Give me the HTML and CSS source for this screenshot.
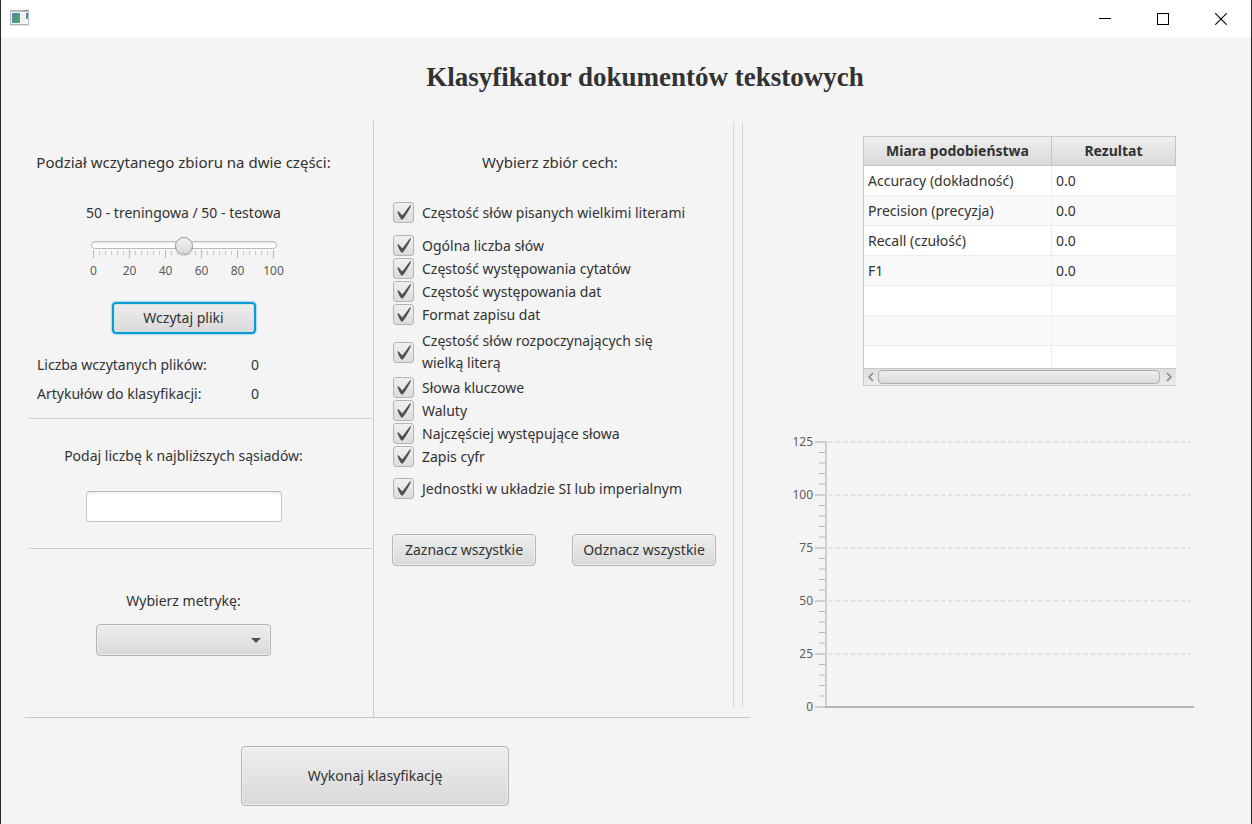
FILE: index.html
```html
<!DOCTYPE html>
<html lang="pl">
<head>
<meta charset="utf-8">
<meta name="viewport" content="width=device-width, initial-scale=1">
<title>Klasyfikator dokumentów tekstowych</title>
<link rel="stylesheet" href="styles.css">
</head>
<body>
<div class="window">
  <header class="titlebar">
    <svg class="app-icon" width="20" height="17" viewBox="0 0 20 17" aria-hidden="true">
      <defs><linearGradient id="pane" x1="0" y1="0" x2="1" y2="1"><stop offset="0" stop-color="#4a7fa5"/><stop offset="1" stop-color="#52b06c"/></linearGradient></defs>
      <rect x="0" y="15" width="19" height="1" fill="#e2e2e4"/>
      <rect x="0.5" y="0.5" width="18" height="14" fill="#fbfbfb" stroke="#b4b4bc"/>
      <rect x="1" y="0" width="17" height="2" fill="#b9bcc2"/>
      <rect x="13" y="0" width="5" height="1" fill="#85898f"/>
      <rect x="2" y="3" width="8" height="10" fill="url(#pane)"/>
      <rect x="11" y="3" width="4" height="10" fill="#efeff1"/>
      <rect x="16" y="3" width="2" height="6" fill="url(#pane)"/>
    </svg>
    <div class="window-buttons">
      <button type="button" aria-label="Minimalizuj"><svg width="12" height="12" viewBox="0 0 12 12"><path d="M0 5.500H12" stroke="#000"/></svg></button>
      <button type="button" aria-label="Maksymalizuj"><svg width="12" height="12" viewBox="0 0 12 12"><rect x=".5" y=".5" width="11" height="11" fill="none" stroke="#000"/></svg></button>
      <button type="button" aria-label="Zamknij"><svg width="12" height="12" viewBox="0 0 12 12"><path d="M.3.3 11.700 11.700M11.700.3.3 11.700" stroke="#000" stroke-width="1.100"/></svg></button>
    </div>
  </header>

  <main class="content">
    <h1 class="title">Klasyfikator dokumentów tekstowych</h1>
    <div class="workspace">
      <div class="controls">
        <div class="panels">
          <div class="settings">
            <section class="section split">
              <h2 class="heading">Podział wczytanego zbioru na dwie części:</h2>
              <label class="split-label" for="split">50 - treningowa / 50 - testowa</label>
              <input class="slider" id="split" type="range" min="0" max="100" value="50">
              <svg class="ticks" width="181" height="8" viewBox="0 0 181 8" aria-hidden="true">
                <path d="M0 3H181" stroke="#c6c6c6" stroke-width="4" stroke-dasharray="1 5"/>
                <path d="M0 4H181" stroke="#b8b8b8" stroke-width="8" stroke-dasharray="1 35"/>
              </svg>
              <div class="scale"><span>0</span><span>20</span><span>40</span><span>60</span><span>80</span><span>100</span></div>
              <button class="button load" type="button">Wczytaj pliki</button>
              <dl class="counts">
                <dt>Liczba wczytanych plików:</dt><dd>0</dd>
                <dt>Artykułów do klasyfikacji:</dt><dd>0</dd>
              </dl>
            </section>
            <section class="section neighbours">
              <label for="k">Podaj liczbę k najbliższych sąsiadów:</label>
              <input class="field" id="k" type="text">
            </section>
            <section class="section metric">
              <label for="metric">Wybierz metrykę:</label>
              <select class="combo" id="metric"><option></option></select>
            </section>
          </div>

          <section class="features">
            <h2 class="heading">Wybierz zbiór cech:</h2>
            <div class="checks">
              <label class="check first"><input type="checkbox" checked><span>Częstość słów pisanych wielkimi literami</span></label>
              <label class="check"><input type="checkbox" checked><span>Ogólna liczba słów</span></label>
              <label class="check"><input type="checkbox" checked><span>Częstość występowania cytatów</span></label>
              <label class="check"><input type="checkbox" checked><span>Częstość występowania dat</span></label>
              <label class="check"><input type="checkbox" checked><span>Format zapisu dat</span></label>
              <label class="check tall"><input type="checkbox" checked><span>Częstość słów rozpoczynających się wielką literą</span></label>
              <label class="check"><input type="checkbox" checked><span>Słowa kluczowe</span></label>
              <label class="check"><input type="checkbox" checked><span>Waluty</span></label>
              <label class="check"><input type="checkbox" checked><span>Najczęściej występujące słowa</span></label>
              <label class="check"><input type="checkbox" checked><span>Zapis cyfr</span></label>
              <label class="check last"><input type="checkbox" checked><span>Jednostki w układzie SI lub imperialnym</span></label>
            </div>
            <div class="select-buttons">
              <button class="button" type="button">Zaznacz wszystkie</button>
              <button class="button" type="button">Odznacz wszystkie</button>
            </div>
          </section>
          <div class="divider"></div>
        </div>
        <div class="run-bar">
          <button class="button run" type="button">Wykonaj klasyfikację</button>
        </div>
      </div>

      <div class="results">
        <div class="table-view">
          <div class="table-clip">
            <table class="table">
              <thead><tr><th scope="col">Miara podobieństwa</th><th scope="col">Rezultat</th></tr></thead>
              <tbody>
                <tr><td>Accuracy (dokładność)</td><td>0.0</td></tr>
                <tr><td>Precision (precyzja)</td><td>0.0</td></tr>
                <tr><td>Recall (czułość)</td><td>0.0</td></tr>
                <tr><td>F1</td><td>0.0</td></tr>
                <tr><td></td><td></td></tr>
                <tr><td></td><td></td></tr>
                <tr><td></td><td></td></tr>
              </tbody>
            </table>
          </div>
          <div class="scrollbar">
            <button type="button" aria-label="Przewiń w lewo"><svg width="6" height="10" viewBox="0 0 6 10"><path d="M5 1 1 5 5 9" fill="none" stroke="#858585" stroke-width="1.500"/></svg></button>
            <div class="thumb"></div>
            <button type="button" aria-label="Przewiń w prawo"><svg width="6" height="10" viewBox="0 0 6 10"><path d="M1 1 5 5 1 9" fill="none" stroke="#858585" stroke-width="1.500"/></svg></button>
          </div>
        </div>

        <svg class="chart" viewBox="0 0 402 280" role="img" aria-label="Wykres wyników">
          <g class="grid-lines">
            <path d="M36 8H398M36 61H398M36 114H398M36 167H398M36 220H398"/>
          </g>
          <g class="minor">
            <path d="M27 18.500H34M27 29H34M27 39.500H34M27 50H34M27 71.500H34M27 82H34M27 92.500H34M27 103H34M27 124.500H34M27 135H34M27 145.500H34M27 156H34M27 177.500H34M27 188H34M27 198.500H34M27 209H34M27 230.500H34M27 241H34M27 251.500H34M27 262H34"/>
          </g>
          <g class="major">
            <path d="M23 8H34M23 61H34M23 114H34M23 167H34M23 220H34M23 273H34"/>
          </g>
          <path class="axis-y" d="M34 7V273"/>
          <path class="axis-x" d="M33 273H402"/>
          <g class="axis-labels">
            <text x="21" y="12">125</text>
            <text x="21" y="65">100</text>
            <text x="21" y="118">75</text>
            <text x="21" y="171">50</text>
            <text x="21" y="224">25</text>
            <text x="21" y="277">0</text>
          </g>
        </svg>
      </div>
    </div>
  </main>
</div>
</body>
</html>
```

FILE: styles.css
```css
* {
  box-sizing: border-box;
}

body {
  margin: 0;
  background: #f4f4f4;
  color: #323232;
  font: 14px/22px "Noto Sans", "Open Sans", sans-serif;
}

button,
input,
select {
  margin: 0;
  color: inherit;
  font: inherit;
}

.window {
  display: flex;
  flex-direction: column;
  min-height: 100vh;
  border: solid #26262b;
  border-width: 0 1px;
}

.titlebar {
  display: flex;
  align-items: center;
  justify-content: space-between;
  height: 37px;
  padding: 0 1px 0 9px;
  background: #fff;
}

.window-buttons {
  display: flex;
}

.window-buttons button {
  display: flex;
  align-items: center;
  justify-content: center;
  width: 58px;
  height: 36px;
  padding: 0;
  border: 0;
  background: none;
}

.content {
  flex: 1;
}

.title {
  margin: 0;
  padding: 24px 0 28px 38px;
  font: bold 27px/32px "Liberation Serif", serif;
  text-align: center;
}

.workspace {
  display: grid;
  grid-template-columns: 749fr 501fr;
}

.controls {
  padding-left: 24px;
}

.panels {
  display: grid;
  grid-template-columns: 349fr 359fr 17px;
  border-bottom: 1px solid #c8c8c8;
}

.settings {
  padding: 0 1px 0 4px;
  border-right: 1px solid #cecece;
}

.section {
  display: flex;
  flex-direction: column;
  align-items: center;
  padding-right: 34px;
  border-bottom: 1px solid #d0d0d0;
}

.heading {
  margin: 0;
  font-size: 15px;
  font-weight: normal;
  line-height: 22px;
}

.split {
  padding-top: 30px;
  padding-bottom: 13px;
}

.split-label {
  margin-top: 29px;
}

.slider {
  width: 186px;
  height: 18px;
  margin-top: 12px;
  appearance: none;
  background: none;
}

.slider::-webkit-slider-runnable-track {
  height: 8px;
  border: 1px solid #bcbcbc;
  border-radius: 4px;
  background: linear-gradient(#e4e4e4, #fff 40%);
}

.slider::-webkit-slider-thumb {
  width: 18px;
  height: 18px;
  margin-top: -5px;
  appearance: none;
  border: 1px solid #999;
  border-radius: 50%;
  background: linear-gradient(#f2f2f2, #dadada);
  box-shadow: 0 1px 1px #0002;
}

.ticks {
  margin-top: -4px;
}

.scale {
  display: flex;
  justify-content: space-between;
  width: 210px;
  margin-top: 3px;
  color: #5c5c5c;
  font-size: 12px;
  line-height: 20px;
}

.scale span {
  width: 30px;
  text-align: center;
}

.button {
  height: 32px;
  padding: 0 8px;
  border: 1px solid #b4b4b4;
  border-radius: 4px;
  background: linear-gradient(#eee, #d9d9d9);
  box-shadow: inset 0 0 0 1px #f3f3f3aa;
}

.load {
  width: 144px;
  margin-top: 21px;
  border: 2px solid #0a9bd3;
  box-shadow: 0 0 1px 1px #a9dbee, inset 0 0 0 1px #cfe2ea;
}

.counts {
  display: grid;
  grid-template-columns: 214px 1fr;
  row-gap: 7px;
  align-self: stretch;
  margin: 20px 0 0;
  padding-left: 8px;
}

.counts dd {
  margin: 0;
}

.neighbours {
  padding-top: 26px;
  padding-bottom: 26px;
}

.field {
  width: 196px;
  height: 31px;
  margin-top: 24px;
  padding: 0 8px;
  border: 1px solid #c4c4c4;
  border-top-color: #b6b6b6;
  border-radius: 4px;
  background: linear-gradient(#f2f2f2, #fff 5px);
}

.metric {
  padding-top: 41px;
  padding-bottom: 61px;
  border-bottom: 0;
}

.combo {
  width: 175px;
  height: 32px;
  margin-top: 12px;
  padding: 0 30px 0 8px;
  appearance: none;
  border: 1px solid #b4b4b4;
  border-radius: 4px;
  background:
    url("data:image/svg+xml,%3Csvg xmlns='http://www.w3.org/2000/svg' width='10' height='5'%3E%3Cpath d='M0 0h10L5 5z' fill='%23505050'/%3E%3C/svg%3E") no-repeat right 9px center,
    linear-gradient(#eee, #d9d9d9);
  box-shadow: inset 0 0 0 1px #f3f3f3aa;
}

.features {
  padding: 30px 17px 0 18px;
}

.features .heading {
  padding-right: 8px;
  text-align: center;
}

.checks {
  display: flex;
  flex-direction: column;
  margin-top: 28px;
  padding: 0 24px 0 1px;
}

.check {
  display: flex;
  align-items: center;
  gap: 8px;
  min-height: 23px;
}

.check input {
  flex: none;
  width: 21px;
  height: 21px;
  appearance: none;
  border: 1px solid #b4b4b4;
  border-radius: 3px;
  background: linear-gradient(#f0f0f0, #dcdcdc);
}

.check input:checked {
  background:
    url("data:image/svg+xml,%3Csvg xmlns='http://www.w3.org/2000/svg' width='14' height='15' viewBox='-1 -1 17 17.500' preserveAspectRatio='none'%3E%3Cpath d='M-.25 6.083c.843-.758 4.583 4.833 5.750 4.833S14.500-1.500 15.917-.917c1.292.532-8.750 17.083-10.500 17.083C3 16.167-1.083 6.833-.25 6.083z' fill='%23505050'/%3E%3C/svg%3E") no-repeat center,
    linear-gradient(#f0f0f0, #dcdcdc);
}

.first {
  margin-bottom: 10px;
}

.tall {
  padding: 4px 0 2px;
}

.last {
  margin-top: 9px;
}

.select-buttons {
  display: flex;
  justify-content: space-between;
  gap: 36px;
  margin-top: 34px;
}

.select-buttons .button {
  flex: 1;
  padding: 0;
  white-space: nowrap;
}

.divider {
  width: 10px;
  margin: 1px 0 10px;
  border: solid #d6d6d6;
  border-width: 0 1px;
}

.run-bar {
  display: flex;
  justify-content: center;
  padding: 28px 25px 18px 0;
}

.run {
  width: 268px;
  height: 60px;
}

.results {
  padding: 15px 57px 0 42px;
}

.table-view {
  margin: 0 18px 0 71px;
  border: 1px solid #c8c8c8;
  border-right: 0;
}

.table-clip {
  height: 231px;
  overflow: hidden;
}

.table {
  width: 100%;
  border-collapse: separate;
  border-spacing: 0;
  table-layout: fixed;
}

.table th {
  height: 29px;
  padding: 0;
  border: solid #c2c2c2;
  border-width: 0 1px 1px 0;
  background: linear-gradient(#efefef, #d9d9d9);
}

.table th:first-child {
  width: 188px;
}

.table td {
  height: 30px;
  padding: 0 4px;
  border: solid #ededed;
  border-width: 0 1px 1px 0;
  background: #fff;
}

.table td:last-child {
  border-right: 0;
}

.table tr:nth-child(even) td {
  background: #f9f9f9;
}

.scrollbar {
  display: flex;
  align-items: center;
  height: 17px;
  border-top: 1px solid #c8c8c8;
  background: linear-gradient(#dedede, #ececec);
}

.scrollbar button {
  display: flex;
  align-items: center;
  justify-content: center;
  width: 14px;
  height: 16px;
  padding: 0;
  border: 0;
  background: none;
}

.thumb {
  flex: 1;
  height: 14px;
  margin-right: 2px;
  border: 1px solid #adadad;
  border-radius: 4px;
  background: linear-gradient(#efefef, #dadada);
}

.chart {
  display: block;
  width: 100%;
  margin-top: 48px;
}

.grid-lines {
  stroke: #e0e0e0;
  stroke-width: 2;
  stroke-dasharray: 5 2.5;
}

.minor {
  stroke: #b8b8b8;
}

.major {
  stroke: #d0d0d0;
  stroke-width: 2;
}

.axis-y {
  stroke: #cecece;
  stroke-width: 2;
}

.axis-x {
  stroke: #b4b4b4;
  stroke-width: 2;
}

.axis-labels {
  fill: #5c5c5c;
  font-size: 12px;
  text-anchor: end;
}
```
